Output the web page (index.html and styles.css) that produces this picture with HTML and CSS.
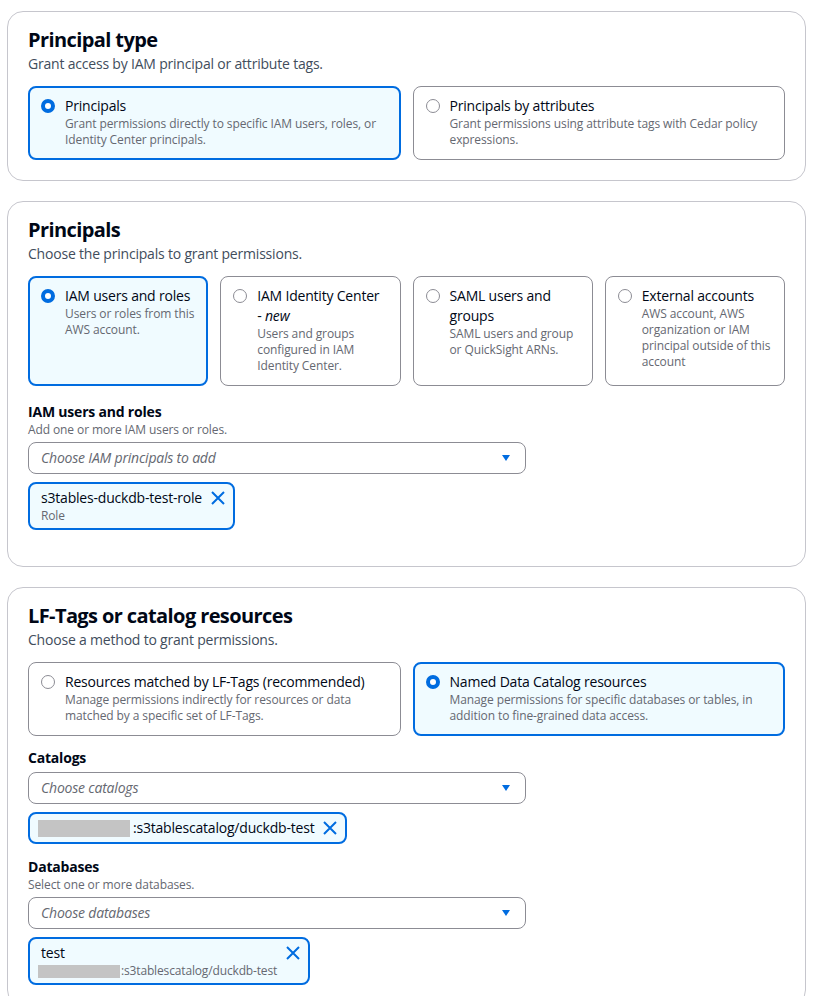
FILE: index.html
```html
<!DOCTYPE html>
<html lang="en">
<head>
<meta charset="utf-8">
<title>Grant permissions</title>
<link rel="stylesheet" href="styles.css">
</head>
<body>
<div class="page">

  <section class="panel">
    <div class="panel-head">
      <h2>Principal type</h2>
      <p>Grant access by IAM principal or attribute tags.</p>
    </div>
    <div class="tiles tiles-2">
      <div class="tile selected">
        <span class="radio on"></span>
        <span class="tile-text">
          <span class="tile-label">Principals</span>
          <span class="tile-desc">Grant permissions directly to specific IAM users, roles, or Identity Center principals.</span>
        </span>
      </div>
      <div class="tile">
        <span class="radio"></span>
        <span class="tile-text">
          <span class="tile-label">Principals by attributes</span>
          <span class="tile-desc">Grant permissions using attribute tags with Cedar policy expressions.</span>
        </span>
      </div>
    </div>
  </section>

  <section class="panel panel-principals">
    <div class="panel-head">
      <h2>Principals</h2>
      <p>Choose the principals to grant permissions.</p>
    </div>
    <div class="tiles tiles-4">
      <div class="tile selected">
        <span class="radio on"></span>
        <span class="tile-text">
          <span class="tile-label">IAM users and roles</span>
          <span class="tile-desc">Users or roles from this AWS account.</span>
        </span>
      </div>
      <div class="tile">
        <span class="radio"></span>
        <span class="tile-text">
          <span class="tile-label">IAM Identity Center <span class="nowrap">- <em>new</em></span></span>
          <span class="tile-desc">Users and groups configured in IAM Identity Center.</span>
        </span>
      </div>
      <div class="tile">
        <span class="radio"></span>
        <span class="tile-text">
          <span class="tile-label">SAML users and groups</span>
          <span class="tile-desc">SAML users and group or QuickSight ARNs.</span>
        </span>
      </div>
      <div class="tile">
        <span class="radio"></span>
        <span class="tile-text">
          <span class="tile-label">External accounts</span>
          <span class="tile-desc">AWS account, AWS organization or IAM principal outside of this account</span>
        </span>
      </div>
    </div>

    <div class="field field-wide">
      <div class="field-label">IAM users and roles</div>
      <div class="field-desc">Add one or more IAM users or roles.</div>
      <div class="select">
        <span class="placeholder">Choose IAM principals to add</span>
        <svg class="caret" width="10" height="8" viewBox="0 0 10 8"><path d="M1 1 H9 L5 7 Z" fill="#006ce0"/></svg>
      </div>
      <div class="tokens">
        <div class="token">
          <span class="token-text">
            <span class="token-main">s3tables-duckdb-test-role</span>
            <span class="token-sub">Role</span>
          </span>
          <svg class="dismiss" width="16" height="16" viewBox="0 0 16 16"><path d="M2 2 L14 14 M14 2 L2 14" stroke="#006ce0" stroke-width="2" fill="none"/></svg>
        </div>
      </div>
    </div>
  </section>

  <section class="panel">
    <div class="panel-head">
      <h2>LF-Tags or catalog resources</h2>
      <p>Choose a method to grant permissions.</p>
    </div>
    <div class="tiles tiles-2">
      <div class="tile">
        <span class="radio"></span>
        <span class="tile-text">
          <span class="tile-label">Resources matched by LF-Tags (recommended)</span>
          <span class="tile-desc">Manage permissions indirectly for resources or data matched by a specific set of LF-Tags.</span>
        </span>
      </div>
      <div class="tile selected">
        <span class="radio on"></span>
        <span class="tile-text">
          <span class="tile-label">Named Data Catalog resources</span>
          <span class="tile-desc">Manage permissions for specific databases or tables, in addition to fine-grained data access.</span>
        </span>
      </div>
    </div>

    <div class="field field-first">
      <div class="field-label">Catalogs</div>
      <div class="select">
        <span class="placeholder">Choose catalogs</span>
        <svg class="caret" width="10" height="8" viewBox="0 0 10 8"><path d="M1 1 H9 L5 7 Z" fill="#006ce0"/></svg>
      </div>
      <div class="tokens">
        <div class="token">
          <span class="token-text">
            <span class="token-main"><span class="redact redact-lg"></span>:s3tablescatalog/duckdb-test</span>
          </span>
          <svg class="dismiss" width="16" height="16" viewBox="0 0 16 16"><path d="M2 2 L14 14 M14 2 L2 14" stroke="#006ce0" stroke-width="2" fill="none"/></svg>
        </div>
      </div>
    </div>

    <div class="field">
      <div class="field-label">Databases</div>
      <div class="field-desc">Select one or more databases.</div>
      <div class="select">
        <span class="placeholder">Choose databases</span>
        <svg class="caret" width="10" height="8" viewBox="0 0 10 8"><path d="M1 1 H9 L5 7 Z" fill="#006ce0"/></svg>
      </div>
      <div class="tokens">
        <div class="token">
          <span class="token-text">
            <span class="token-main">test</span>
            <span class="token-sub"><span class="redact redact-sm"></span>:s3tablescatalog/duckdb-test</span>
          </span>
          <svg class="dismiss" width="16" height="16" viewBox="0 0 16 16"><path d="M2 2 L14 14 M14 2 L2 14" stroke="#006ce0" stroke-width="2" fill="none"/></svg>
        </div>
      </div>
    </div>
  </section>

</div>
</body>
</html>
```

FILE: styles.css
```css
html, body {
  margin: 0;
  padding: 0;
  background: #ffffff;
  overflow: hidden;
}

body {
  font-family: "Open Sans", "Noto Sans", Arial, sans-serif;
  color: #000716;
  font-size: 14px;
  line-height: 20px;
  letter-spacing: -0.2px;
}

.page {
  padding: 11px 9px 0 7px;
  display: flex;
  flex-direction: column;
  gap: 20px;
}

.panel {
  border: 1px solid #c6c6cd;
  border-radius: 16px;
  padding: 16px 20px 20px;
  background: #ffffff;
}

.panel-principals {
  padding-bottom: 36px;
}

.panel-head h2 {
  margin: 0;
  font-size: 20px;
  line-height: 24px;
  font-weight: 700;
  letter-spacing: -0.6px;
  color: #000716;
}

.panel-head p {
  margin: 2px 0 0;
  font-size: 14px;
  line-height: 20px;
  color: #414d5c;
}

.tiles {
  margin-top: 12px;
  display: grid;
  gap: 12px;
}

.tiles-2 {
  grid-template-columns: repeat(2, 1fr);
}

.tiles-4 {
  grid-template-columns: repeat(4, 1fr);
}

.tile {
  display: flex;
  align-items: flex-start;
  gap: 10px;
  border: 1px solid #8c8c94;
  border-radius: 8px;
  padding: 9px 9px 11px 12px;
  background: #ffffff;
}

.tile.selected {
  border: 2px solid #006ce0;
  padding: 8px 8px 10px 11px;
  background: #f0fbff;
}

.radio {
  flex: none;
  width: 14px;
  height: 14px;
  margin-top: 3px;
  box-sizing: border-box;
  border-radius: 50%;
  border: 1px solid #8c8c94;
  background: #ffffff;
}

.radio.on {
  border: 4.5px solid #006ce0;
}

.tile-text {
  display: flex;
  flex-direction: column;
  min-width: 0;
}

.tile-label {
  font-size: 14px;
  line-height: 20px;
  color: #000716;
}

.nowrap {
  white-space: nowrap;
}

.tile-desc {
  font-size: 12px;
  line-height: 16px;
  letter-spacing: -0.1px;
  color: #656871;
}

.field {
  margin-top: 13px;
}

.field-first {
  margin-top: 12px;
}

.field-wide {
  margin-top: 16px;
}

.field-label {
  font-size: 14px;
  line-height: 20px;
  font-weight: 700;
  color: #000716;
}

.field-desc {
  font-size: 12px;
  line-height: 16px;
  letter-spacing: -0.1px;
  color: #656871;
}

.select {
  margin-top: 4px;
  width: 498px;
  height: 32px;
  box-sizing: border-box;
  border: 1px solid #8c8c94;
  border-radius: 8px;
  display: flex;
  align-items: center;
  justify-content: space-between;
  padding: 0 14px 0 12px;
  background: #ffffff;
}

.placeholder {
  font-style: italic;
  color: #656871;
  font-size: 14px;
}

.caret {
  display: block;
}

.tokens {
  margin-top: 8px;
  display: flex;
  flex-wrap: wrap;
  gap: 8px;
}

.token {
  display: inline-flex;
  align-items: flex-start;
  gap: 8px;
  border: 2px solid #006ce0;
  border-radius: 8px;
  background: #f0fbff;
  padding: 4px 7px 4px 11px;
}

.token-text {
  display: flex;
  flex-direction: column;
}

.token-main {
  display: flex;
  align-items: center;
  font-size: 14px;
  line-height: 20px;
  color: #000716;
}

.token-sub {
  display: flex;
  align-items: center;
  font-size: 12px;
  line-height: 16px;
  letter-spacing: -0.15px;
  color: #656871;
}

.redact {
  display: inline-block;
  background: #c4c4c4;
  margin-left: -3px;
}

.redact-lg {
  width: 92px;
  height: 17px;
  margin-right: 3px;
}

.redact-sm {
  width: 82px;
  height: 13px;
  margin-right: 1px;
}

.dismiss {
  flex: none;
  display: block;
  margin-top: 2px;
}
```
